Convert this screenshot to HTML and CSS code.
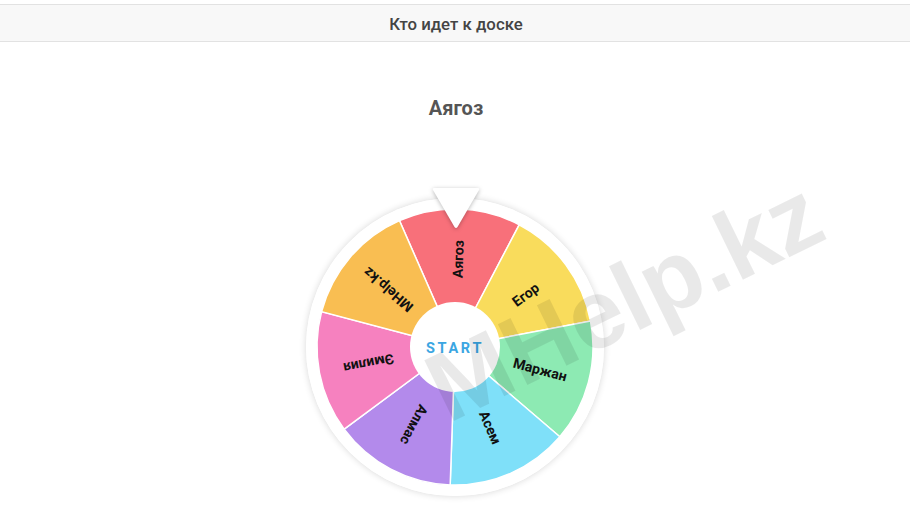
FILE: index.html
```html
<!DOCTYPE html>
<html lang="ru">
<head>
<meta charset="utf-8">
<title>Кто идет к доске</title>
<link rel="stylesheet" href="styles.css">
</head>
<body>
<header class="topbar">Кто идет к доске</header>
<main class="content">
  <h1 class="winner">Аягоз</h1>
  <div class="wheel">
    <svg class="wheel-svg" width="298" height="298" viewBox="0 0 298 298">
      <circle cx="149" cy="149" r="149" fill="#ffffff"/>
      <g transform="rotate(2 149 149)">
        <g stroke="#ffffff" stroke-width="1.5">
          <path d="M149,149 L89.12,24.66 A138,138 0 0 1 208.88,24.66 Z" fill="#f8707a"/>
          <path d="M149,149 L208.88,24.66 A138,138 0 0 1 283.54,118.29 Z" fill="#f9dc5c"/>
          <path d="M149,149 L283.54,118.29 A138,138 0 0 1 256.89,235.04 Z" fill="#8deab3"/>
          <path d="M149,149 L256.89,235.04 A138,138 0 0 1 149,287 Z" fill="#7fe0f9"/>
          <path d="M149,149 L149,287 A138,138 0 0 1 41.11,235.04 Z" fill="#b38aeb"/>
          <path d="M149,149 L41.11,235.04 A138,138 0 0 1 14.46,118.29 Z" fill="#f681bf"/>
          <path d="M149,149 L14.46,118.29 A138,138 0 0 1 89.12,24.66 Z" fill="#f9be52"/>
        </g>
        <g class="labels">
          <text x="237" y="149" transform="rotate(-90 149 149)">Аягоз</text>
          <text x="237" y="149" transform="rotate(-38.571 149 149)">Егор</text>
          <text x="237" y="149" transform="rotate(12.857 149 149)">Маржан</text>
          <text x="237" y="149" transform="rotate(64.286 149 149)">Асем</text>
          <text x="237" y="149" transform="rotate(115.714 149 149)">Алмас</text>
          <text x="237" y="149" transform="rotate(167.143 149 149)">Эмилия</text>
          <text x="237" y="149" transform="rotate(218.571 149 149)">MHelp.kz</text>
        </g>
      </g>
      <circle cx="149" cy="149" r="45" fill="#ffffff"/>
      <text class="start" x="149" y="150">START</text>
    </svg>
    <svg class="pointer" width="52" height="46" viewBox="0 0 52 46">
      <path d="M4,2 L48,2 Q50,2 49,4 L27.5,41 Q26,43 24.5,41 L3,4 Q2,2 4,2 Z" fill="#ffffff"/>
    </svg>
  </div>
</main>
<div class="watermark">MHelp.kz</div>
</body>
</html>
```

FILE: styles.css
```css
html, body {
  margin: 0;
  padding: 0;
  background: #ffffff;
}
body {
  font-family: Roboto, "Liberation Sans", Arial, sans-serif;
  width: 910px;
  height: 512px;
  overflow: hidden;
  position: relative;
}
.topbar {
  margin-top: 4px;
  border-top: 1px solid #e2e2e2;
  border-bottom: 1px solid #e2e2e2;
  background: #f8f8f8;
  display: flex;
  align-items: center;
  justify-content: center;
  padding-left: 2px;
  padding-top: 1px;
  box-sizing: border-box;
  height: 38px;
  font-size: 16.8px;
  font-weight: 500;
  color: #444444;
}
.content {
  display: flex;
  flex-direction: column;
  align-items: center;
}
.winner {
  margin: 54px 0 0 0;
  height: 24px;
  line-height: 24px;
  font-size: 20px;
  font-weight: 700;
  color: #555555;
  padding-left: 2px;
}
.wheel {
  position: relative;
  width: 298px;
  height: 298px;
  margin-top: 78px;
  border-radius: 50%;
  box-shadow: 0 0 7px rgba(0, 0, 0, 0.16);
}
.wheel-svg {
  display: block;
}
.labels text {
  font-family: Roboto, "Liberation Sans", Arial, sans-serif;
  font-size: 14px;
  font-weight: 700;
  fill: #111111;
  text-anchor: middle;
  dominant-baseline: central;
}
.start {
  font-family: Roboto, "Liberation Sans", Arial, sans-serif;
  font-size: 14.5px;
  font-weight: 700;
  letter-spacing: 2.7px;
  fill: #3ba6e2;
  text-anchor: middle;
  dominant-baseline: central;
}
.pointer {
  position: absolute;
  left: 124px;
  top: -12px;
  filter: drop-shadow(0 1px 2px rgba(0, 0, 0, 0.28));
}
.watermark {
  position: absolute;
  left: 624px;
  top: 300px;
  transform: translate(-50%, -50%) rotate(-26deg);
  font-family: "Liberation Sans", Arial, sans-serif;
  font-weight: 700;
  font-size: 98px;
  line-height: 1;
  color: rgba(0, 0, 0, 0.085);
  white-space: nowrap;
  pointer-events: none;
}
```
